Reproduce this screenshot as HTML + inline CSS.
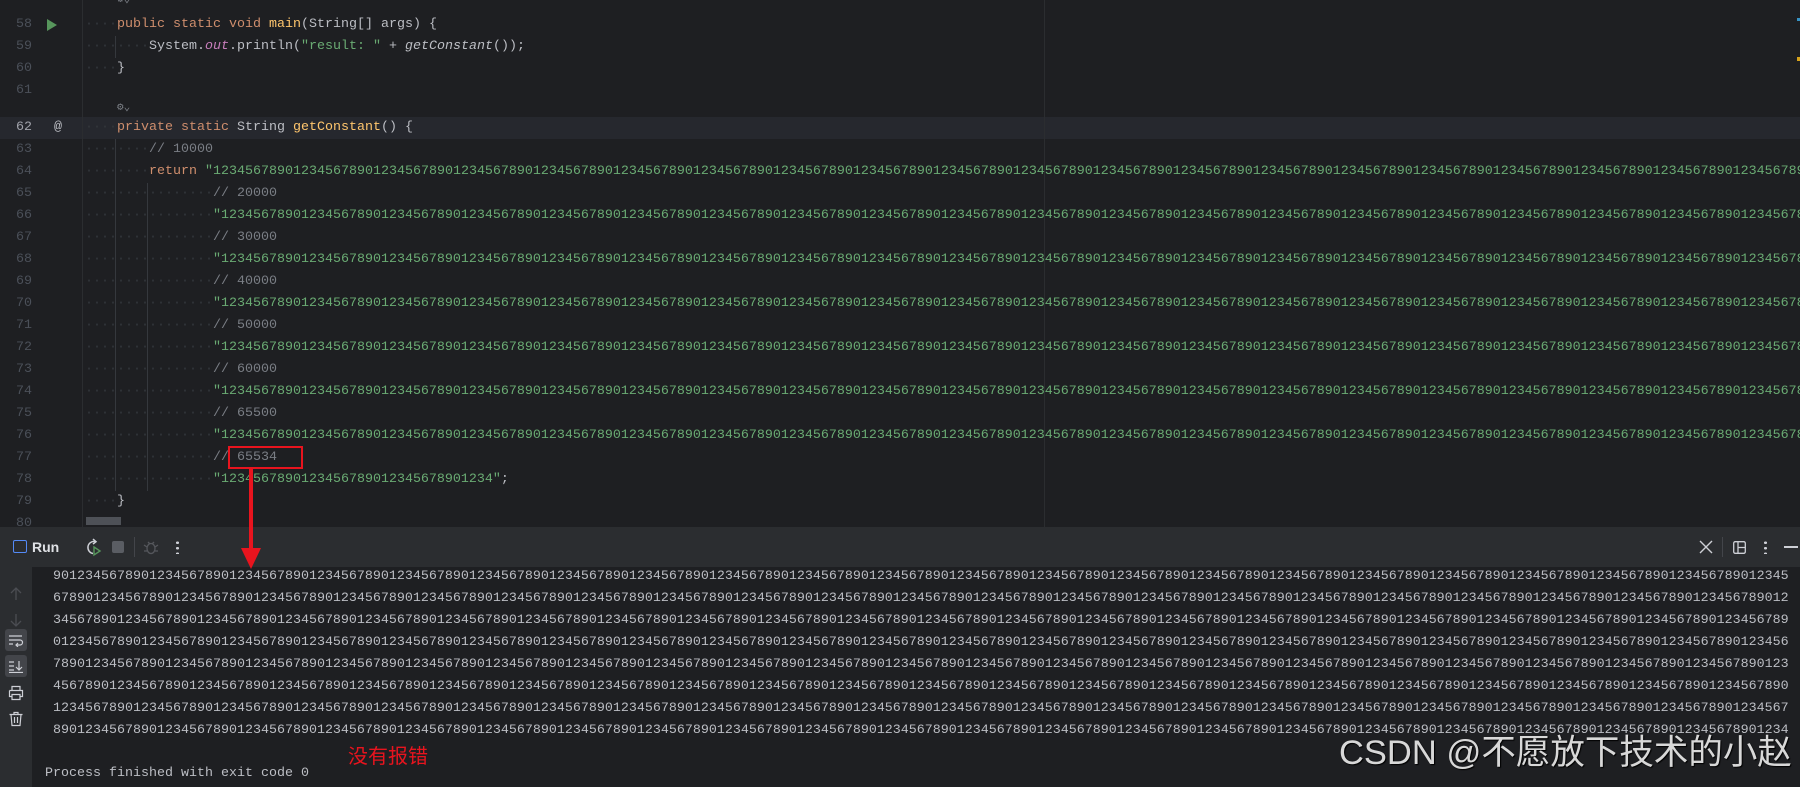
<!DOCTYPE html>
<html><head><meta charset="utf-8"><style>
*{margin:0;padding:0;box-sizing:border-box}
body{width:1800px;height:787px;background:#1e1f22;overflow:hidden;position:relative;font-family:"Liberation Mono",monospace;font-size:13.33px;color:#bcbec4}
.l{position:absolute;left:0;width:1800px;height:22px;line-height:22px;white-space:pre;overflow:hidden}
.n{position:absolute;left:0;width:32px;text-align:right;color:#4b5059}
.c{position:absolute;left:85px}
.d{color:#34373c}
.k{color:#cf8e6d}.s{color:#6aab73}.cm{color:#7a7e85}.f{color:#ffc66d}.p{color:#c77dbb;font-style:italic}.i{font-style:italic}
.cl{position:absolute;left:53px;width:1736px;height:22px;line-height:22px;white-space:pre;overflow:hidden;color:#bcbec4}
</style></head><body>
<div style="position:absolute;left:0;top:117px;width:1800px;height:22px;background:#26282e"></div>
<div style="position:absolute;left:82px;top:0;width:1px;height:527px;background:#2b2d30"></div>
<div style="position:absolute;left:1044px;top:0;width:1px;height:527px;background:#2b2d30"></div>
<div style="position:absolute;left:115px;top:36px;width:1px;height:22px;background:#35383d"></div>
<div style="position:absolute;left:115px;top:139px;width:1px;height:352px;background:#35383d"></div>
<div style="position:absolute;left:147px;top:183px;width:1px;height:308px;background:#35383d"></div>
<div style="position:absolute;left:1797px;top:18px;width:3px;height:3px;background:#3592c4"></div>
<div style="position:absolute;left:1797px;top:57px;width:3px;height:4px;background:#d6a21b"></div>

<div class="l" style="top:-8px;height:17px;line-height:17px"><span style="position:absolute;left:117px;color:#7a7e85;font-size:11px">⚙⌄</span></div>
<div class="l" style="top:14px"><span class="n">58</span><svg style="position:absolute;left:46px;top:5px" width="12" height="12"><path d="M1 0L11 6L1 12Z" fill="#57965c"/></svg><span class="c"><span class="d">····</span><span class="k">public static void </span><span class="f">main</span>(String[] args) {</span></div>
<div class="l" style="top:36px"><span class="n">59</span><span class="c"><span class="d">········</span>System.<span class="p">out</span>.println(<span class="s">"result: "</span> + <span class="i">getConstant</span>());</span></div>
<div class="l" style="top:58px"><span class="n">60</span><span class="c"><span class="d">····</span>}</span></div>
<div class="l" style="top:80px"><span class="n">61</span></div>
<div class="l" style="top:100px;height:17px;line-height:17px"><span style="position:absolute;left:117px;color:#7a7e85;font-size:11px">⚙⌄</span></div>
<div class="l" style="top:117px"><span class="n" style="color:#a1a3ab">62</span><span style="position:absolute;left:54px;color:#bcbec4">@</span><span class="c"><span class="d">····</span><span class="k">private static </span>String <span class="f">getConstant</span>() {</span></div>
<div class="l" style="top:139px"><span class="n">63</span><span class="c"><span class="d">········</span><span class="cm">// 10000</span></span></div>
<div class="l" style="top:161px"><span class="n">64</span><span class="c"><span class="d">········</span><span class="k">return </span><span class="s">"12345678901234567890123456789012345678901234567890123456789012345678901234567890123456789012345678901234567890123456789012345678901234567890123456789012345678901234567890123456789012345678901234567890123456789012345678901234567890</span></span></div>
<div class="l" style="top:183px"><span class="n">65</span><span class="c"><span class="d">················</span><span class="cm">// 20000</span></span></div>
<div class="l" style="top:205px"><span class="n">66</span><span class="c"><span class="d">················</span><span class="s">"12345678901234567890123456789012345678901234567890123456789012345678901234567890123456789012345678901234567890123456789012345678901234567890123456789012345678901234567890123456789012345678901234567890123456789012345678901234567890</span></span></div>
<div class="l" style="top:227px"><span class="n">67</span><span class="c"><span class="d">················</span><span class="cm">// 30000</span></span></div>
<div class="l" style="top:249px"><span class="n">68</span><span class="c"><span class="d">················</span><span class="s">"12345678901234567890123456789012345678901234567890123456789012345678901234567890123456789012345678901234567890123456789012345678901234567890123456789012345678901234567890123456789012345678901234567890123456789012345678901234567890</span></span></div>
<div class="l" style="top:271px"><span class="n">69</span><span class="c"><span class="d">················</span><span class="cm">// 40000</span></span></div>
<div class="l" style="top:293px"><span class="n">70</span><span class="c"><span class="d">················</span><span class="s">"12345678901234567890123456789012345678901234567890123456789012345678901234567890123456789012345678901234567890123456789012345678901234567890123456789012345678901234567890123456789012345678901234567890123456789012345678901234567890</span></span></div>
<div class="l" style="top:315px"><span class="n">71</span><span class="c"><span class="d">················</span><span class="cm">// 50000</span></span></div>
<div class="l" style="top:337px"><span class="n">72</span><span class="c"><span class="d">················</span><span class="s">"12345678901234567890123456789012345678901234567890123456789012345678901234567890123456789012345678901234567890123456789012345678901234567890123456789012345678901234567890123456789012345678901234567890123456789012345678901234567890</span></span></div>
<div class="l" style="top:359px"><span class="n">73</span><span class="c"><span class="d">················</span><span class="cm">// 60000</span></span></div>
<div class="l" style="top:381px"><span class="n">74</span><span class="c"><span class="d">················</span><span class="s">"12345678901234567890123456789012345678901234567890123456789012345678901234567890123456789012345678901234567890123456789012345678901234567890123456789012345678901234567890123456789012345678901234567890123456789012345678901234567890</span></span></div>
<div class="l" style="top:403px"><span class="n">75</span><span class="c"><span class="d">················</span><span class="cm">// 65500</span></span></div>
<div class="l" style="top:425px"><span class="n">76</span><span class="c"><span class="d">················</span><span class="s">"12345678901234567890123456789012345678901234567890123456789012345678901234567890123456789012345678901234567890123456789012345678901234567890123456789012345678901234567890123456789012345678901234567890123456789012345678901234567890</span></span></div>
<div class="l" style="top:447px"><span class="n">77</span><span class="c"><span class="d">················</span><span class="cm">// 65534</span></span></div>
<div class="l" style="top:469px"><span class="n">78</span><span class="c"><span class="d">················</span><span class="s">"1234567890123456789012345678901234"</span>;</span></div>
<div class="l" style="top:491px"><span class="n">79</span><span class="c"><span class="d">····</span>}</span></div>
<div class="l" style="top:513px"><span class="n">80</span></div>
<div style="position:absolute;left:86px;top:517px;width:35px;height:8px;background:#4e5157"></div>

<div style="position:absolute;left:0;top:527px;width:1800px;height:40px;background:#2b2d30"></div>
<div style="position:absolute;left:13px;top:540px;width:14px;height:13px;border:1.5px solid #548af7;border-radius:2px"></div>
<div style="position:absolute;left:32px;top:536px;font-family:'Liberation Sans',sans-serif;font-weight:bold;font-size:14px;color:#dfe1e5;line-height:22px">Run</div>
<svg style="position:absolute;left:83px;top:538px" width="20" height="20"><path d="M12 3.5A6 6 0 1 0 10 15.5" stroke="#ced0d6" stroke-width="1.5" fill="none"/><path d="M10 1l3 2.7-3 2.3" stroke="#ced0d6" stroke-width="1.5" fill="none"/><path d="M11 9l6 4-6 4z" stroke="#57965c" stroke-width="1.4" fill="none"/></svg>
<div style="position:absolute;left:112px;top:541px;width:12px;height:12px;background:#5a5d63;border-radius:2px"></div>
<div style="position:absolute;left:134px;top:537px;width:1px;height:20px;background:#43454a"></div>
<svg style="position:absolute;left:143px;top:539px" width="16" height="16"><ellipse cx="8" cy="9.5" rx="4" ry="5" stroke="#55575c" stroke-width="1.3" fill="none"/><path d="M1 6l3 2M15 6l-3 2M1 12h3M15 12h-3M5 3l2 2M11 3l-2 2" stroke="#55575c" stroke-width="1.3"/></svg>
<div style="position:absolute;left:176px;top:540px;width:2.5px;height:14px;background:radial-gradient(circle,#ced0d6 1.2px,transparent 1.3px) 0 0/2.5px 5.5px"></div>
<svg style="position:absolute;left:1699px;top:540px" width="14" height="14"><path d="M1 1L13 13M13 1L1 13" stroke="#ced0d6" stroke-width="1.4"/></svg>
<div style="position:absolute;left:1722px;top:537px;width:1px;height:20px;background:#43454a"></div>
<svg style="position:absolute;left:1733px;top:541px" width="13" height="13"><rect x="0.7" y="0.7" width="11.6" height="11.6" rx="1.5" stroke="#ced0d6" stroke-width="1.3" fill="none"/><path d="M5 1v11M5 6.5h7" stroke="#ced0d6" stroke-width="1.3"/></svg>
<div style="position:absolute;left:1764px;top:540px;width:2.5px;height:14px;background:radial-gradient(circle,#ced0d6 1.2px,transparent 1.3px) 0 0/2.5px 5.5px"></div>
<div style="position:absolute;left:1784px;top:546px;width:14px;height:1.5px;background:#ced0d6"></div>

<div style="position:absolute;left:0;top:567px;width:32px;height:220px;background:#2b2d30"></div>
<svg style="position:absolute;left:8px;top:586px" width="16" height="16"><path d="M8 2v12M3 7l5-5 5 5" stroke="#4b4d52" stroke-width="1.3" fill="none"/></svg>
<svg style="position:absolute;left:8px;top:612px" width="16" height="16"><path d="M8 2v12M3 9l5 5 5-5" stroke="#4b4d52" stroke-width="1.3" fill="none"/></svg>
<div style="position:absolute;left:5px;top:629px;width:22px;height:22px;background:#43454a;border-radius:3px"></div>
<svg style="position:absolute;left:8px;top:633px" width="16" height="14"><path d="M1 3h13M1 7h11a2.5 2.5 0 0 1 0 5H8M10 10l-2 2 2 2M1 11h4" stroke="#ced0d6" stroke-width="1.2" fill="none"/></svg>
<div style="position:absolute;left:5px;top:655px;width:22px;height:22px;background:#43454a;border-radius:3px"></div>
<svg style="position:absolute;left:8px;top:659px" width="16" height="14"><path d="M1 3h5M1 7h5M1 11h5M1 13.5h14M11 2v9M8 8l3 3 3-3" stroke="#ced0d6" stroke-width="1.2" fill="none"/></svg>
<svg style="position:absolute;left:8px;top:685px" width="16" height="16"><path d="M4 5V1.5h8V5M1.5 5.5h13v6H12M4 11.5H1.5v-6M4 9.5h8v5H4z" stroke="#ced0d6" stroke-width="1.2" fill="none"/></svg>
<svg style="position:absolute;left:8px;top:711px" width="16" height="16"><path d="M1.5 3.5h13M6 3.5V1.5h4v2M3 3.5l1 11h8l1-11M6.5 6v6M9.5 6v6" stroke="#ced0d6" stroke-width="1.2" fill="none"/></svg>

<div class="cl" style="top:566px">90123456789012345678901234567890123456789012345678901234567890123456789012345678901234567890123456789012345678901234567890123456789012345678901234567890123456789012345678901234567890123456789012345678901234567890123456789012345678</div>
<div class="cl" style="top:588px">67890123456789012345678901234567890123456789012345678901234567890123456789012345678901234567890123456789012345678901234567890123456789012345678901234567890123456789012345678901234567890123456789012345678901234567890123456789012345</div>
<div class="cl" style="top:610px">34567890123456789012345678901234567890123456789012345678901234567890123456789012345678901234567890123456789012345678901234567890123456789012345678901234567890123456789012345678901234567890123456789012345678901234567890123456789012</div>
<div class="cl" style="top:632px">01234567890123456789012345678901234567890123456789012345678901234567890123456789012345678901234567890123456789012345678901234567890123456789012345678901234567890123456789012345678901234567890123456789012345678901234567890123456789</div>
<div class="cl" style="top:654px">78901234567890123456789012345678901234567890123456789012345678901234567890123456789012345678901234567890123456789012345678901234567890123456789012345678901234567890123456789012345678901234567890123456789012345678901234567890123456</div>
<div class="cl" style="top:676px">45678901234567890123456789012345678901234567890123456789012345678901234567890123456789012345678901234567890123456789012345678901234567890123456789012345678901234567890123456789012345678901234567890123456789012345678901234567890123</div>
<div class="cl" style="top:698px">12345678901234567890123456789012345678901234567890123456789012345678901234567890123456789012345678901234567890123456789012345678901234567890123456789012345678901234567890123456789012345678901234567890123456789012345678901234567890</div>
<div class="cl" style="top:720px">89012345678901234567890123456789012345678901234567890123456789012345678901234567890123456789012345678901234567890123456789012345678901234567890123456789012345678901234567890123456789012345678901234567890123456789012345678901234567</div>
<div class="cl" style="top:763px;left:45px">Process finished with exit code 0</div>

<div style="position:absolute;left:228px;top:446px;width:75px;height:23px;border:2px solid #e8141e"></div>
<div style="position:absolute;left:249px;top:469px;width:4px;height:82px;background:#e8141e"></div>
<svg style="position:absolute;left:241px;top:548px" width="20" height="21"><path d="M0 0L20 0L10 21Z" fill="#e8141e"/></svg>
<div style="position:absolute;left:348px;top:744px;font-family:'Liberation Sans','Noto Sans CJK SC',sans-serif;font-size:20px;color:#e8141e;line-height:26px">没有报错</div>
<div style="position:absolute;left:1339px;top:731px;font-family:'Liberation Sans','Noto Sans CJK SC',sans-serif;font-size:34.5px;color:#d8d8d8;line-height:44px;white-space:nowrap;text-shadow:1px 1px 1px #000">CSDN @不愿放下技术的小赵</div>
</body></html>
